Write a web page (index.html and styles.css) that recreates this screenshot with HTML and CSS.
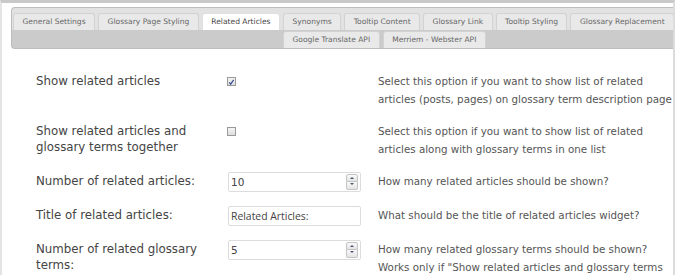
FILE: index.html
```html
<!DOCTYPE html>
<html lang="en">
<head>
    <meta charset="UTF-8">
    <title>Glossary Settings - Related Articles</title>
    <link rel="stylesheet" href="styles.css">
</head>
<body>
    <div class="page">
        <div class="tabs">
            <ul class="tab-row">
                <li class="tab">General Settings</li>
                <li class="tab">Glossary Page Styling</li>
                <li class="tab active">Related Articles</li>
                <li class="tab">Synonyms</li>
                <li class="tab">Tooltip Content</li>
                <li class="tab">Glossary Link</li>
                <li class="tab">Tooltip Styling</li>
                <li class="tab">Glossary Replacement</li>
            </ul>
            <ul class="tab-row tab-row-second">
                <li class="tab">Google Translate API</li>
                <li class="tab">Merriem - Webster API</li>
            </ul>
        </div>

        <div class="form">
            <div class="form-row">
                <div class="label">Show related articles</div>
                <div class="control"><span class="checkbox checked"><svg width="8" height="8" viewBox="0 0 8 8"><path d="M1.5 4.5 L3 6.5 L6.5 1.5" fill="none" stroke="#3f4f8f" stroke-width="1.4"/></svg></span></div>
                <div class="desc">Select this option if you want to show list of related articles (posts, pages) on glossary term description page</div>
            </div>
            <div class="form-row">
                <div class="label">Show related articles and glossary terms together</div>
                <div class="control"><span class="checkbox"></span></div>
                <div class="desc">Select this option if you want to show list of related articles along with glossary terms in one list</div>
            </div>
            <div class="form-row">
                <div class="label label-field">Number of related articles:</div>
                <div class="control">
                    <div class="field number">10
                        <span class="spinner"><span class="spin up"></span><span class="spin down"></span></span>
                    </div>
                </div>
                <div class="desc">How many related articles should be shown?</div>
            </div>
            <div class="form-row">
                <div class="label label-field">Title of related articles:</div>
                <div class="control"><div class="field text">Related Articles:</div></div>
                <div class="desc">What should be the title of related articles widget?</div>
            </div>
            <div class="form-row">
                <div class="label label-field">Number of related glossary terms:</div>
                <div class="control">
                    <div class="field number">5
                        <span class="spinner"><span class="spin up"></span><span class="spin down"></span></span>
                    </div>
                </div>
                <div class="desc">How many related glossary terms should be shown? Works only if "Show related articles and glossary terms together" is selected</div>
            </div>
        </div>
    </div>
</body>
</html>
```

FILE: styles.css
```css
body {
    margin: 0;
    font-family: "DejaVu Sans", Verdana, sans-serif;
    background-color: #fff;
    overflow: hidden;
}
.page {
    box-sizing: border-box;
    height: 275px;
    overflow: hidden;
    border-top: 3px solid #c9c9c9;
    border-left: 2px solid #e4e4e4;
    border-right: 2px solid #dcdcdc;
}
.tabs {
    box-sizing: border-box;
    height: 42px;
    margin: 4px 0 0 9px;
    padding: 5px 0 0 1px;
    border: 1px solid #bdbdbd;
    border-right: none;
    border-radius: 4px 0 0 4px;
    background: linear-gradient(#e2e2e2 0, #e2e2e2 22px, #cbcbcb 22px);
}
.tab-row {
    display: flex;
    margin: 0;
    padding: 0;
    list-style: none;
}
.tab-row-second {
    margin: 1px 0 0 270px;
}
.tab {
    box-sizing: border-box;
    height: 17px;
    padding: 0 8.5px;
    margin-right: 3px;
    border: 1px solid #d2d2d2;
    border-bottom: none;
    border-radius: 3px 3px 0 0;
    background-color: #e9e9e9;
    color: #666;
    font-size: 7.55px;
    line-height: 16px;
    white-space: nowrap;
}
.tab.active {
    background-color: #fff;
    border-color: #e0e0e0;
    color: #444;
}
.form {
    margin: 16px 0 0 34px;
}
.form-row {
    display: grid;
    grid-template-columns: 192px 150px 300px;
    padding: 7px 0;
}
.label {
    padding: 1px 16px 0 0;
    color: #444;
    font-size: 11.8px;
    line-height: 16px;
}
.desc {
    color: #555;
    font-size: 10.3px;
    line-height: 18px;
}
.checkbox {
    box-sizing: border-box;
    display: flex;
    align-items: center;
    justify-content: center;
    width: 9px;
    height: 9px;
    margin: 5px 0 0 -1px;
    border: 1px solid #9a9a9a;
    background: linear-gradient(#f4f4f4, #dedede);
}
.checkbox svg {
    display: block;
}
.field {
    box-sizing: border-box;
    position: relative;
    width: 133px;
    height: 20px;
    padding-left: 2px;
    border: 1px solid #dcdcdc;
    border-radius: 2px;
    background-color: #fff;
    color: #444;
    line-height: 18px;
}
.field.number {
    font-size: 10.5px;
}
.field.text {
    font-family: "Open Sans", "DejaVu Sans", sans-serif;
    font-size: 10.4px;
}
.spinner {
    position: absolute;
    top: 1px;
    right: 2px;
    display: flex;
    flex-direction: column;
    width: 12px;
}
.spin {
    box-sizing: border-box;
    position: relative;
    height: 8px;
    border: 1px solid #c4c4c4;
    background: linear-gradient(#fafafa, #e4e4e4);
}
.spin.up {
    border-radius: 2px 2px 0 0;
}
.spin.down {
    border-top: none;
    border-radius: 0 0 2px 2px;
}
.spin::after {
    content: "";
    position: absolute;
    left: 3px;
    top: 2px;
    border-left: 2px solid transparent;
    border-right: 2px solid transparent;
}
.spin.up::after {
    border-bottom: 2px solid #4a5570;
}
.spin.down::after {
    top: 1px;
    border-top: 2px solid #4a5570;
}
```
